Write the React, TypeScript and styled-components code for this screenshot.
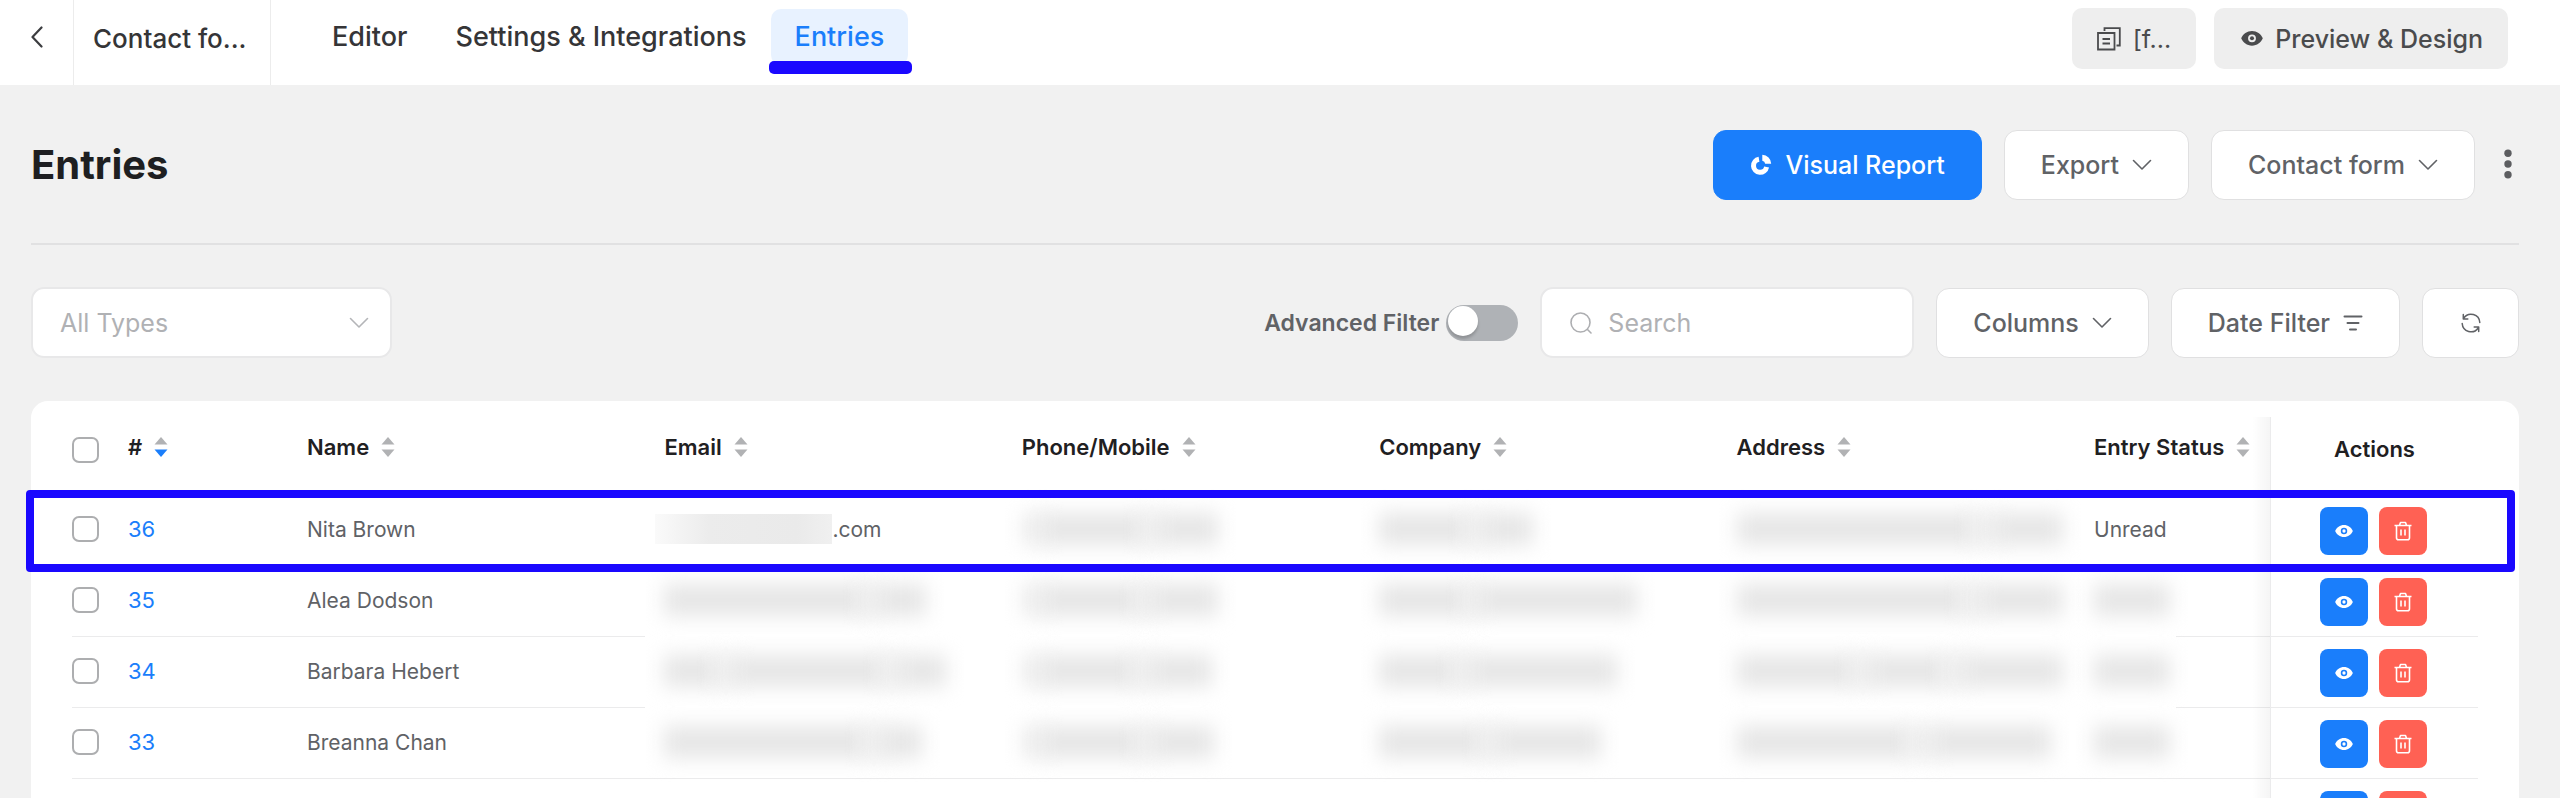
import React from "react";
import styled, { createGlobalStyle, css } from "styled-components";

const BLUE = "#1a7efb";
const MARK = "#1a08ff";

const GlobalStyle = createGlobalStyle`
  *, *::before, *::after { box-sizing: border-box; }
  body {
    margin: 0;
    background: #f1f1f1;
    font-family: Inter, "Liberation Sans", sans-serif;
    color: #606266;
    -webkit-font-smoothing: antialiased;
  }
  button, input, select { font-family: inherit; }
  a { text-decoration: none; color: inherit; }
`;

const Page = styled.div`
  height: 100vh;
  overflow: hidden;
  background: #f1f1f1;
`;

/* ---------- top bar ---------- */

const TopBar = styled.header`
  display: flex;
  height: 85px;
  padding-right: 52px;
  background: #fff;
`;

const BackLink = styled.a`
  display: flex;
  align-items: center;
  justify-content: center;
  width: 74px;
  padding-bottom: 11px;
  border-right: 1px solid #ececec;
  color: #3c3d40;
`;

const FormName = styled.div`
  width: 197px;
  padding: 23px 0 0 19px;
  border-right: 1px solid #ececec;
  font-size: 26px;
  font-weight: 500;
  line-height: 32px;
  color: #353537;
`;

const Tabs = styled.nav`
  display: flex;
  align-items: flex-start;
  flex: 1;
  margin: 9px 0 0 37px;
`;

const Tab = styled.a<{ $active?: boolean }>`
  position: relative;
  padding: 12px 24px;
  border-radius: 10px;
  font-size: 27px;
  font-weight: 500;
  line-height: 32px;
  color: #353537;
  ${(p) =>
    p.$active &&
    css`
      background: #e8f2ff;
      color: ${BLUE};
      &::after {
        content: "";
        position: absolute;
        left: -2px;
        right: -4px;
        top: 52px;
        height: 13px;
        border-radius: 5px;
        background: ${MARK};
      }
    `}
`;

const TopActions = styled.div`
  display: flex;
  gap: 18px;
  padding-top: 8px;
`;

const GreyButton = styled.button<{ $strong?: boolean }>`
  display: flex;
  align-items: center;
  gap: 12px;
  height: 61px;
  padding: 0 25px 0 ${(p) => (p.$strong ? 27 : 25)}px;
  border: 0;
  border-radius: 10px;
  background: #eeeeee;
  font-size: 25px;
  font-weight: ${(p) => (p.$strong ? 500 : 400)};
  color: #4a4b4d;
`;

/* ---------- page head and filters ---------- */

const Main = styled.main`
  padding: 0 41px 0 31px;
`;

const PageHead = styled.div`
  display: flex;
  align-items: center;
  gap: 22px;
  padding: 45px 0 43px;
  border-bottom: 2px solid #e1e1e2;
`;

const Title = styled.h1`
  flex: 1;
  margin: 0;
  font-size: 40px;
  font-weight: 700;
  line-height: 48px;
  color: #1e1f21;
`;

const Button = styled.button<{ $primary?: boolean; $square?: boolean }>`
  display: flex;
  align-items: center;
  justify-content: center;
  gap: 13px;
  height: 70px;
  padding: 0 ${(p) => (p.$square ? 0 : 36)}px;
  ${(p) => p.$square && "width: 97px;"}
  border: 1px solid ${(p) => (p.$primary ? BLUE : "#e0e0e1")};
  border-radius: 13px;
  background: ${(p) => (p.$primary ? BLUE : "#fff")};
  font-size: 25px;
  font-weight: 500;
  white-space: nowrap;
  color: ${(p) => (p.$primary ? "#fff" : "#606266")};
`;

const MoreButton = styled.button`
  display: flex;
  margin: 0 7px 3px;
  padding: 0;
  border: 0;
  background: none;
  color: #5c5d60;
`;

const Filters = styled.div`
  display: flex;
  align-items: center;
  gap: 22px;
  padding: 42px 0 43px;
`;

const SelectBox = styled.div`
  display: grid;
  align-items: center;
  margin-right: auto;
  width: 361px;

  > * { grid-area: 1 / 1; }
  > svg { justify-self: end; margin-right: 23px; color: #b4b5b8; pointer-events: none; }
`;

const Select = styled.select`
  appearance: none;
  height: 71px;
  padding: 0 60px 0 27px;
  border: 2px solid #e8e8e9;
  border-radius: 13px;
  background: #fff;
  font-size: 25px;
  color: #b0b1b4;
`;

const SwitchLabel = styled.label`
  display: flex;
  align-items: center;
  gap: 7px;
  font-size: 23px;
  font-weight: 600;
  color: #606266;
`;

const Switch = styled.input`
  appearance: none;
  display: flex;
  align-items: center;
  width: 72px;
  height: 36px;
  margin: 0;
  padding: 0 2px 4px;
  border-radius: 18px;
  background: #afb2b6;

  &::before {
    content: "";
    width: 30px;
    height: 30px;
    border-radius: 50%;
    background: #fff;
    box-shadow: 0 3px 3px rgba(0, 0, 0, 0.18);
  }
`;

const SearchBox = styled.label`
  display: flex;
  align-items: center;
  gap: 16px;
  width: 374px;
  height: 71px;
  padding: 0 28px;
  border: 2px solid #e8e8e9;
  border-radius: 13px;
  background: #fff;
  color: #adaeb1;
`;

const SearchInput = styled.input`
  flex: 1;
  min-width: 0;
  padding: 0;
  border: 0;
  outline: 0;
  background: none;
  font-size: 25px;
  &::placeholder { color: #b0b1b4; opacity: 1; }
`;

/* ---------- table ---------- */

const Card = styled.section`
  padding: 16px 41px 40px;
  border-radius: 17px;
  background: #fff;
`;

const Table = styled.table`
  width: 100%;
  table-layout: fixed;
  border-collapse: separate;
  border-spacing: 0;
  font-size: 21px;
`;

const Th = styled.th<{ $w?: number; $pad?: number }>`
  ${(p) => p.$w && `width: ${p.$w}px;`}
  height: 78px;
  padding: 0 0 18px ${(p) => p.$pad ?? 19}px;
  text-align: left;
  font-size: 22px;
  font-weight: 600;
  white-space: nowrap;
  color: #1f2022;
`;

const CheckTh = styled(Th)`
  padding-bottom: 12px;
`;

const SortHead = styled.span`
  display: flex;
  align-items: center;
  gap: 12px;
`;

const Row = styled.tr`
  position: relative;
`;

const RowMarker = styled.span`
  position: absolute;
  z-index: 2;
  top: -5px;
  bottom: -6px;
  left: -46px;
  right: -37px;
  border: 8px solid ${MARK};
  border-radius: 4px;
  pointer-events: none;
`;

type Line = "full" | "end" | "none";
const lineSize = { full: "100% 1px", end: "94px 1px", none: "0 0" };

const Td = styled.td<{ $line?: Line; $pad?: number }>`
  height: 71px;
  padding: 0 0 3px ${(p) => p.$pad ?? 19}px;
  background: linear-gradient(#ebebec, #ebebec) no-repeat
    ${(p) => (p.$line === "end" ? "right" : "left")} bottom / ${(p) => lineSize[p.$line ?? "full"]};
  white-space: nowrap;
`;

const pinned = css`
  position: relative;
  &::before {
    content: "";
    position: absolute;
    top: 0;
    bottom: 0;
    left: -18px;
    width: 19px;
    border-right: 1px solid #ebebec;
    background: linear-gradient(to right, rgba(0, 0, 0, 0), rgba(0, 0, 0, 0.04));
  }
`;

const PinnedTh = styled(Th)`
  ${pinned}
  padding-bottom: 15px;
`;

const PinnedTd = styled(Td)`
  ${pinned}
  padding-bottom: 0;
`;

const Check = styled.input`
  appearance: none;
  display: block;
  width: 27px;
  height: 26px;
  margin: 0;
  border: 2px solid #adaeb0;
  border-radius: 7px;
  background: #fff;
`;

const EntryLink = styled.a`
  font-size: 22px;
  color: ${BLUE};
`;

const Actions = styled.div`
  display: flex;
  gap: 11px;
`;

const IconButton = styled.button<{ $danger?: boolean }>`
  display: flex;
  align-items: center;
  justify-content: center;
  width: 48px;
  height: 48px;
  padding: 0;
  border: 0;
  border-radius: 8px;
  background: ${(p) => (p.$danger ? "#ff6154" : BLUE)};
  color: #fff;
`;

const Hidden = styled.span`
  display: flex;
  align-items: center;
`;

const Smudge = styled.span<{ $w: number; $faint?: boolean }>`
  width: ${(p) => p.$w}px;
  height: 32px;
  background: ${(p) => (p.$faint ? "#ededed" : "#e6e6e6")};
  filter: blur(10px);
`;

const SmudgeGroup = styled(Hidden)`
  margin-right: 12px;
  > * + * { margin-left: -6px; padding-left: 6px; }
`;

const SharpSmudge = styled.span`
  width: 177px;
  height: 30px;
  margin-left: -9px;
  background: linear-gradient(to right, #fafafa, #ececec 30%, #eaeaea 80%, #f0f0f0);
`;

/* ---------- icons ---------- */

const Chevron = () => (
  <svg width="20" height="12" viewBox="0 0 20 12" fill="none" stroke="currentColor" strokeWidth="1.6" strokeLinecap="round" strokeLinejoin="round">
    <path d="M1.5 1.5 10 10l8.5-8.5" />
  </svg>
);

const BackIcon = () => (
  <svg width="12" height="22" viewBox="0 0 12 22" fill="none" stroke="currentColor" strokeWidth="2.2" strokeLinecap="round" strokeLinejoin="round">
    <path d="M10.5 1.5 1.5 11l9 9.5" />
  </svg>
);

const CopyIcon = () => (
  <svg width="24" height="24" viewBox="0 0 24 24" fill="none" stroke="currentColor" strokeWidth="1.8">
    <path d="M1 6h16.500v16.500H1z" />
    <path d="M7.500 4V1.200H22.800V18.500H19.500" />
    <path d="M5.500 12h7.500M5.500 16.500h7.500" />
  </svg>
);

const Eye = ({ size }: { size: number }) => (
  <svg width={size} height={(size * 16) / 24} viewBox="0 0 24 16" fill="currentColor">
    <path
      fillRule="evenodd"
      d="M12 0C6.600 0 2.200 3.200.200 8c2 4.800 6.400 8 11.800 8s9.800-3.200 11.800-8C21.800 3.200 17.400 0 12 0zm0 3.700a4.300 4.300 0 1 1 0 8.600 4.300 4.300 0 0 1 0-8.600z"
    />
    <circle cx="12" cy="8" r="2.200" />
  </svg>
);

const PieIcon = () => (
  <svg width="22" height="22" viewBox="0 0 22 22" fill="none">
    <path d="M9 5.200A6.600 6.600 0 1 0 16.600 13" stroke="currentColor" strokeWidth="5" />
    <path d="M12.300.800a9 9 0 0 1 8.900 8.900h-6a3.400 3.400 0 0 0-2.900-2.900z" fill="currentColor" />
  </svg>
);

const DotsIcon = () => (
  <svg width="8" height="30" viewBox="0 0 8 30" fill="currentColor">
    <circle cx="4" cy="4.200" r="3.700" />
    <circle cx="4" cy="15" r="3.700" />
    <circle cx="4" cy="25.800" r="3.700" />
  </svg>
);

const SearchIcon = () => (
  <svg width="22" height="22" viewBox="0 0 22 22" fill="none" stroke="currentColor" strokeWidth="1.600" strokeLinecap="round">
    <circle cx="10.500" cy="10.500" r="9.500" />
    <path d="m17.500 17.500 3.500 3.500" />
  </svg>
);

const FilterIcon = () => (
  <svg width="20" height="18" viewBox="0 0 20 18" fill="none" stroke="currentColor" strokeWidth="2" strokeLinecap="round">
    <path d="M1.500 2.500h17M4.500 9h11M7 15.500h6" />
  </svg>
);

const RefreshIcon = () => (
  <svg width="20" height="20" viewBox="0 0 20 20" fill="none" stroke="currentColor" strokeWidth="1.500" strokeLinecap="round" strokeLinejoin="round">
    <path d="M18.800 9.500A8.800 8.800 0 0 0 2.800 5M2.300 1.500V6h4.500" />
    <path d="M1.200 10.500A8.800 8.800 0 0 0 17.200 15M17.700 18.500V14h-4.500" />
  </svg>
);

const TrashIcon = () => (
  <svg width="18" height="20" viewBox="0 0 18 20" fill="none" stroke="currentColor" strokeWidth="1.600" strokeLinejoin="round">
    <path d="M.500 4.500h17M5.500 4.200 6.500 1.500h5l1 2.700M2.500 4.500v12.200a2 2 0 0 0 2 2h9a2 2 0 0 0 2-2V4.500M7 8.500v6M11 8.500v6" />
  </svg>
);

const SortIcon = ({ active }: { active?: boolean }) => (
  <svg width="14" height="20" viewBox="0 0 14 20" fill="#b1b2b4">
    <path d="M7 0l6.500 7.500H.500z" />
    <path d="M7 20L.500 12.500h13z" fill={active ? BLUE : undefined} />
  </svg>
);

/* ---------- data ---------- */

/* Private values are kept as stretches of [width, faint?] instead of text. */
type Stretch = [number, boolean?];

type Entry = {
  id: number;
  name: string;
  emailEnd?: string;
  status?: string;
  email: Stretch[];
  phone: Stretch[];
  company: Stretch[];
  address: Stretch[];
  marked?: boolean;
  line: "full" | "partial";
};

const entries: Entry[] = [
  { id: 36, name: "Nita Brown", emailEnd: ".com", status: "Unread", email: [], phone: [[24, true], [106], [24, true], [60]], company: [[92], [24, true], [50]], address: [[250], [30, true], [72]], marked: true, line: "full" },
  { id: 35, name: "Alea Dodson", email: [[202], [22, true], [50]], phone: [[24, true], [102], [20, true], [68]], company: [[90], [20, true], [160]], address: [[234], [26, true], [84]], line: "partial" },
  { id: 34, name: "Barbara Hebert", email: [[56], [24, true], [154], [24, true], [48]], phone: [[24, true], [98], [24, true], [62]], company: [[80], [22, true], [148]], address: [[122], [24, true], [80], [26, true], [102]], line: "partial" },
  { id: 33, name: "Breanna Chan", email: [[204], [24, true], [42]], phone: [[24, true], [102], [22, true], [62]], company: [[106], [22, true], [106]], address: [[176], [30, true], [120]], line: "full" },
];

const columns = ["Name", "Email", "Phone/Mobile", "Company", "Address"];

const Redacted = ({ parts }: { parts: Stretch[] }) => (
  <SmudgeGroup>
    {parts.map(([width, faint], i) => (
      <Smudge key={i} $w={width} $faint={faint} />
    ))}
  </SmudgeGroup>
);

const RowActions = () => (
  <PinnedTd $pad={50}>
    <Actions>
      <IconButton type="button" aria-label="View entry">
        <Eye size={18} />
      </IconButton>
      <IconButton type="button" $danger aria-label="Delete entry">
        <TrashIcon />
      </IconButton>
    </Actions>
  </PinnedTd>
);

const EntryRow = ({ entry }: { entry: Entry }) => {
  const full = entry.line === "full";
  const middle: Line = full ? "full" : "none";
  return (
    <Row>
      <Td $pad={0}>
        <Check type="checkbox" aria-label={`Select entry ${entry.id}`} />
        {entry.marked && <RowMarker />}
      </Td>
      <Td>
        <EntryLink href="#">{entry.id}</EntryLink>
      </Td>
      <Td>{entry.name}</Td>
      <Td $line={middle}>
        {entry.emailEnd ? (
          <Hidden>
            <SharpSmudge />
            {entry.emailEnd}
          </Hidden>
        ) : (
          <Redacted parts={entry.email} />
        )}
      </Td>
      <Td $line={middle}>
        <Redacted parts={entry.phone} />
      </Td>
      <Td $line={middle}>
        <Redacted parts={entry.company} />
      </Td>
      <Td $line={middle}>
        <Redacted parts={entry.address} />
      </Td>
      <Td $line={full ? "full" : "end"}>{entry.status ?? <Redacted parts={[[76]]} />}</Td>
      <RowActions />
    </Row>
  );
};

export default function App() {
  return (
    <Page>
      <GlobalStyle />
      <TopBar>
        <BackLink href="#" aria-label="Back">
          <BackIcon />
        </BackLink>
        <FormName>Contact fo...</FormName>
        <Tabs>
          <Tab href="#">Editor</Tab>
          <Tab href="#">Settings &amp; Integrations</Tab>
          <Tab href="#" $active>
            Entries
          </Tab>
        </Tabs>
        <TopActions>
          <GreyButton type="button">
            <CopyIcon />
            [f...
          </GreyButton>
          <GreyButton type="button" $strong>
            <Eye size={22} />
            Preview &amp; Design
          </GreyButton>
        </TopActions>
      </TopBar>

      <Main>
        <PageHead>
          <Title>Entries</Title>
          <Button type="button" $primary>
            <PieIcon />
            Visual Report
          </Button>
          <Button type="button">
            Export
            <Chevron />
          </Button>
          <Button type="button">
            Contact form
            <Chevron />
          </Button>
          <MoreButton type="button" aria-label="More">
            <DotsIcon />
          </MoreButton>
        </PageHead>

        <Filters>
          <SelectBox>
            <Select aria-label="Entry types" defaultValue="all">
              <option value="all">All Types</option>
            </Select>
            <Chevron />
          </SelectBox>
          <SwitchLabel>
            Advanced Filter
            <Switch type="checkbox" />
          </SwitchLabel>
          <SearchBox>
            <SearchIcon />
            <SearchInput type="text" placeholder="Search" aria-label="Search" />
          </SearchBox>
          <Button type="button">
            Columns
            <Chevron />
          </Button>
          <Button type="button">
            Date Filter
            <FilterIcon />
          </Button>
          <Button type="button" $square aria-label="Refresh">
            <RefreshIcon />
          </Button>
        </Filters>

        <Card>
          <Table>
            <thead>
              <tr>
                <CheckTh $w={37} $pad={0}>
                  <Check type="checkbox" aria-label="Select all entries" />
                </CheckTh>
                <Th $w={179}>
                  <SortHead>
                    #<SortIcon active />
                  </SortHead>
                </Th>
                {columns.map((name) => (
                  <Th key={name}>
                    <SortHead>
                      {name}
                      <SortIcon />
                    </SortHead>
                  </Th>
                ))}
                <Th $w={195}>
                  <SortHead>
                    Entry Status
                    <SortIcon />
                  </SortHead>
                </Th>
                <PinnedTh $w={208} $pad={64}>
                  Actions
                </PinnedTh>
              </tr>
            </thead>
            <tbody>
              {entries.map((entry) => (
                <EntryRow key={entry.id} entry={entry} />
              ))}
              <Row>
                <Td $pad={0} colSpan={8} />
                <RowActions />
              </Row>
            </tbody>
          </Table>
        </Card>
      </Main>
    </Page>
  );
}
